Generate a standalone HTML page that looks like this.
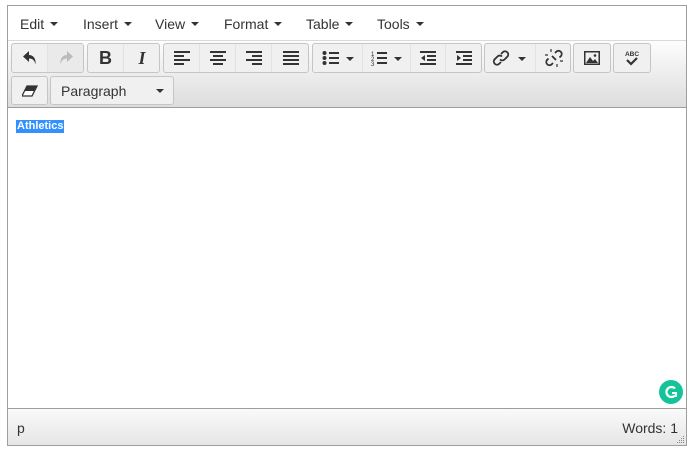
<!DOCTYPE html>
<html><head><meta charset="utf-8"><style>
*{box-sizing:border-box;margin:0;padding:0}
body{width:696px;height:451px;background:#fff;font-family:"Liberation Sans",Arial,sans-serif;position:relative;overflow:hidden}
.ed{position:absolute;left:7px;top:5px;width:680px;height:441px;border:1px solid #9e9e9e}
.menu{position:absolute;left:0;top:0;width:678px;height:35px;background:#fff;border-bottom:1px solid #d9d9d9}
.mi{position:absolute;top:10px;font-size:14px;color:#333}
.car{display:inline-block;width:0;height:0;border-left:4px solid transparent;border-right:4px solid transparent;border-top:4px solid #333;vertical-align:middle;margin-left:6px;margin-top:-2px}
.tb{position:absolute;left:0;top:35px;width:678px;height:67px;background:linear-gradient(#fdfdfd,#dddddd);border-bottom:1px solid #9e9e9e}
.g{position:absolute;height:30px;border:1px solid #c5c5c5;border-radius:3px;background:#f0f0f0;overflow:hidden}
.b{position:absolute;top:0;height:28px;border-right:1px solid #e2e2e2;display:flex;align-items:center;justify-content:center}
.b:last-child{border-right:none}
.content{position:absolute;left:0;top:102px;width:678px;height:300px;background:#fff}
.sel{position:absolute;left:8px;top:12px;background:#3390ff;color:#fff;font-weight:bold;font-size:11px;line-height:13px;padding:0 1px}
.status{position:absolute;left:0;top:402px;width:678px;height:37px;border-top:1px solid #9e9e9e;background:linear-gradient(#fafafa,#e6e6e6);font-size:14px;color:#333}
</style></head><body>
<div class="ed">
 <div class="menu">
  <span class="mi" style="left:12px">Edit<i class="car"></i></span>
  <span class="mi" style="left:75px">Insert<i class="car"></i></span>
  <span class="mi" style="left:147px">View<i class="car"></i></span>
  <span class="mi" style="left:216px">Format<i class="car"></i></span>
  <span class="mi" style="left:298px">Table<i class="car"></i></span>
  <span class="mi" style="left:369px">Tools<i class="car"></i></span>
 </div>
 <div class="tb">
  <div class="g" style="left:3px;top:2px;width:73px">
   <div class="b" style="left:0;width:36px"><svg width="16" height="16" viewBox="0 0 16 16"><path d="M7 1L1 6.5 7 12V8.5c3.5 0 5.5 1.5 6.5 6 .8-6-2.5-9.5-6.5-9.5z" fill="#333"/></svg></div>
   <div class="b" style="left:36px;width:36px;background:#eaeaea"><svg width="16" height="16" viewBox="0 0 16 16"><path d="M9 1l6 5.5L9 12V8.5c-3.5 0-5.5 1.5-6.5 6-.8-6 2.5-9.5 6.5-9.5z" fill="#bbb"/></svg></div>
  </div>
  <div class="g" style="left:79px;top:2px;width:73px">
   <div class="b" style="left:0;width:36px;font-weight:bold;font-size:18px;color:#333">B</div>
   <div class="b" style="left:36px;width:36px;font-style:italic;font-weight:bold;font-size:18px;font-family:'Liberation Serif',serif;color:#333">I</div>
  </div>
  <div class="g" style="left:155px;top:2px;width:146px">
   <div class="b" style="left:0;width:36px"><svg width="16" height="14"><path d="M0 1h16M0 5h10M0 9h16M0 13h10" stroke="#333" stroke-width="2"/></svg></div>
   <div class="b" style="left:36px;width:36px"><svg width="16" height="14"><path d="M0 1h16M3 5h10M0 9h16M3 13h10" stroke="#333" stroke-width="2"/></svg></div>
   <div class="b" style="left:72px;width:36px"><svg width="16" height="14"><path d="M0 1h16M6 5h10M0 9h16M6 13h10" stroke="#333" stroke-width="2"/></svg></div>
   <div class="b" style="left:108px;width:37px"><svg width="16" height="14"><path d="M0 1h16M0 5h16M0 9h16M0 13h16" stroke="#333" stroke-width="2"/></svg></div>
  </div>
  <div class="g" style="left:304px;top:2px;width:170px">
   <div class="b" style="left:0;width:50px"><svg width="32" height="16"><circle cx="2.5" cy="3" r="2" fill="#333"/><circle cx="2.5" cy="8" r="2" fill="#333"/><circle cx="2.5" cy="13" r="2" fill="#333"/><path d="M7 3h10M7 8h10M7 13h10" stroke="#333" stroke-width="2"/><path d="M24 7h8l-4 4z" fill="#333"/></svg></div>
   <div class="b" style="left:50px;width:48px"><svg width="32" height="16"><text x="0" y="6" font-size="6" fill="#333" font-family="Liberation Sans">1</text><text x="0" y="11" font-size="6" fill="#333" font-family="Liberation Sans">2</text><text x="0" y="16" font-size="6" fill="#333" font-family="Liberation Sans">3</text><path d="M6 3h10M6 8h10M6 13h10" stroke="#333" stroke-width="2"/><path d="M23 7h8l-4 4z" fill="#333"/></svg></div>
   <div class="b" style="left:98px;width:35px"><svg width="16" height="16"><path d="M0 2h16M7 6h9M7 10h9M0 14h16" stroke="#333" stroke-width="2"/><path d="M5 5v6L1 8z" fill="#333"/></svg></div>
   <div class="b" style="left:133px;width:36px"><svg width="16" height="16"><path d="M0 2h16M7 6h9M7 10h9M0 14h16" stroke="#333" stroke-width="2"/><path d="M1 5v6l4-3z" fill="#333"/></svg></div>
  </div>
  <div class="g" style="left:476px;top:2px;width:87px">
   <div class="b" style="left:0;width:51px"><svg width="36" height="18"><path d="M9 5l2-2a3.2 3.2 0 014.5 4.5l-3 3a3.2 3.2 0 01-4.5 0M9 13l-2 2a3.2 3.2 0 01-4.5-4.5l3-3a3.2 3.2 0 014.5 0" stroke="#333" stroke-width="1.8" fill="none"/><path d="M26 8h8l-4 4z" fill="#333"/></svg></div>
   <div class="b" style="left:51px;width:35px"><svg width="18" height="18"><path d="M10 4l1.5-1.5a3.2 3.2 0 014.5 4.5L14.5 8.5M8 14l-1.5 1.5a3.2 3.2 0 01-4.5-4.5L3.5 9.5M7 7l4 4" stroke="#333" stroke-width="1.8" fill="none"/><path d="M6 0v3M0 6h3M12 15v3M15 12h3" stroke="#333" stroke-width="1.2"/></svg></div>
  </div>
  <div class="g" style="left:565px;top:2px;width:38px">
   <div class="b" style="left:0;width:36px"><svg width="16" height="14"><rect x="0.75" y="0.75" width="14.5" height="12.5" fill="none" stroke="#333" stroke-width="1.5"/><path d="M2 12l4-6 3 4 2-2 3 4z" fill="#333"/><circle cx="11" cy="4.5" r="1.3" fill="#333"/></svg></div>
  </div>
  <div class="g" style="left:605px;top:2px;width:38px">
   <div class="b" style="left:0;width:36px"><svg width="16" height="16"><text x="8" y="6" text-anchor="middle" font-size="6.5" font-weight="bold" fill="#333" font-family="Liberation Sans">ABC</text><path d="M3 10l4 4 6-6" stroke="#333" stroke-width="2.2" fill="none"/></svg></div>
  </div>
  <div class="g" style="left:3px;top:35px;width:37px;height:29px">
   <div class="b" style="left:0;width:35px;height:27px"><svg width="16" height="12"><path d="M5 1h10L10 11H0z" fill="#fff" stroke="#333" stroke-width="1.3"/><path d="M5 1h10l-3 5H2z" fill="#333"/></svg></div>
  </div>
  <div class="g" style="left:42px;top:35px;width:124px;height:29px">
   <div style="position:absolute;left:10px;top:6px;font-size:14px;color:#333">Paragraph</div>
   <div style="position:absolute;left:105px;top:12px;width:0;height:0;border-left:4px solid transparent;border-right:4px solid transparent;border-top:4px solid #333"></div>
  </div>
 </div>
 <div class="content">
  <span class="sel">Athletics</span>
  <svg style="position:absolute;left:651px;top:272px" width="24" height="24"><circle cx="12" cy="12" r="12" fill="#15c39a"/><path d="M16 8.5a5 5 0 100 7" stroke="#fff" stroke-width="2.2" fill="none"/><path d="M13 13h4v4" stroke="#fff" stroke-width="2" fill="none"/></svg>
 </div>
 <div class="status">
  <span style="position:absolute;left:9px;top:11px">p</span>
  <span style="position:absolute;right:8px;top:11px">Words: 1</span>
  <svg style="position:absolute;right:1px;bottom:1px" width="9" height="9"><g fill="#888"><rect x="7" y="1" width="1" height="1"/><rect x="5" y="3" width="1" height="1"/><rect x="7" y="3" width="1" height="1"/><rect x="3" y="5" width="1" height="1"/><rect x="5" y="5" width="1" height="1"/><rect x="7" y="5" width="1" height="1"/><rect x="1" y="7" width="1" height="1"/><rect x="3" y="7" width="1" height="1"/><rect x="5" y="7" width="1" height="1"/><rect x="7" y="7" width="1" height="1"/></g></svg>
 </div>
</div>
</body></html>
